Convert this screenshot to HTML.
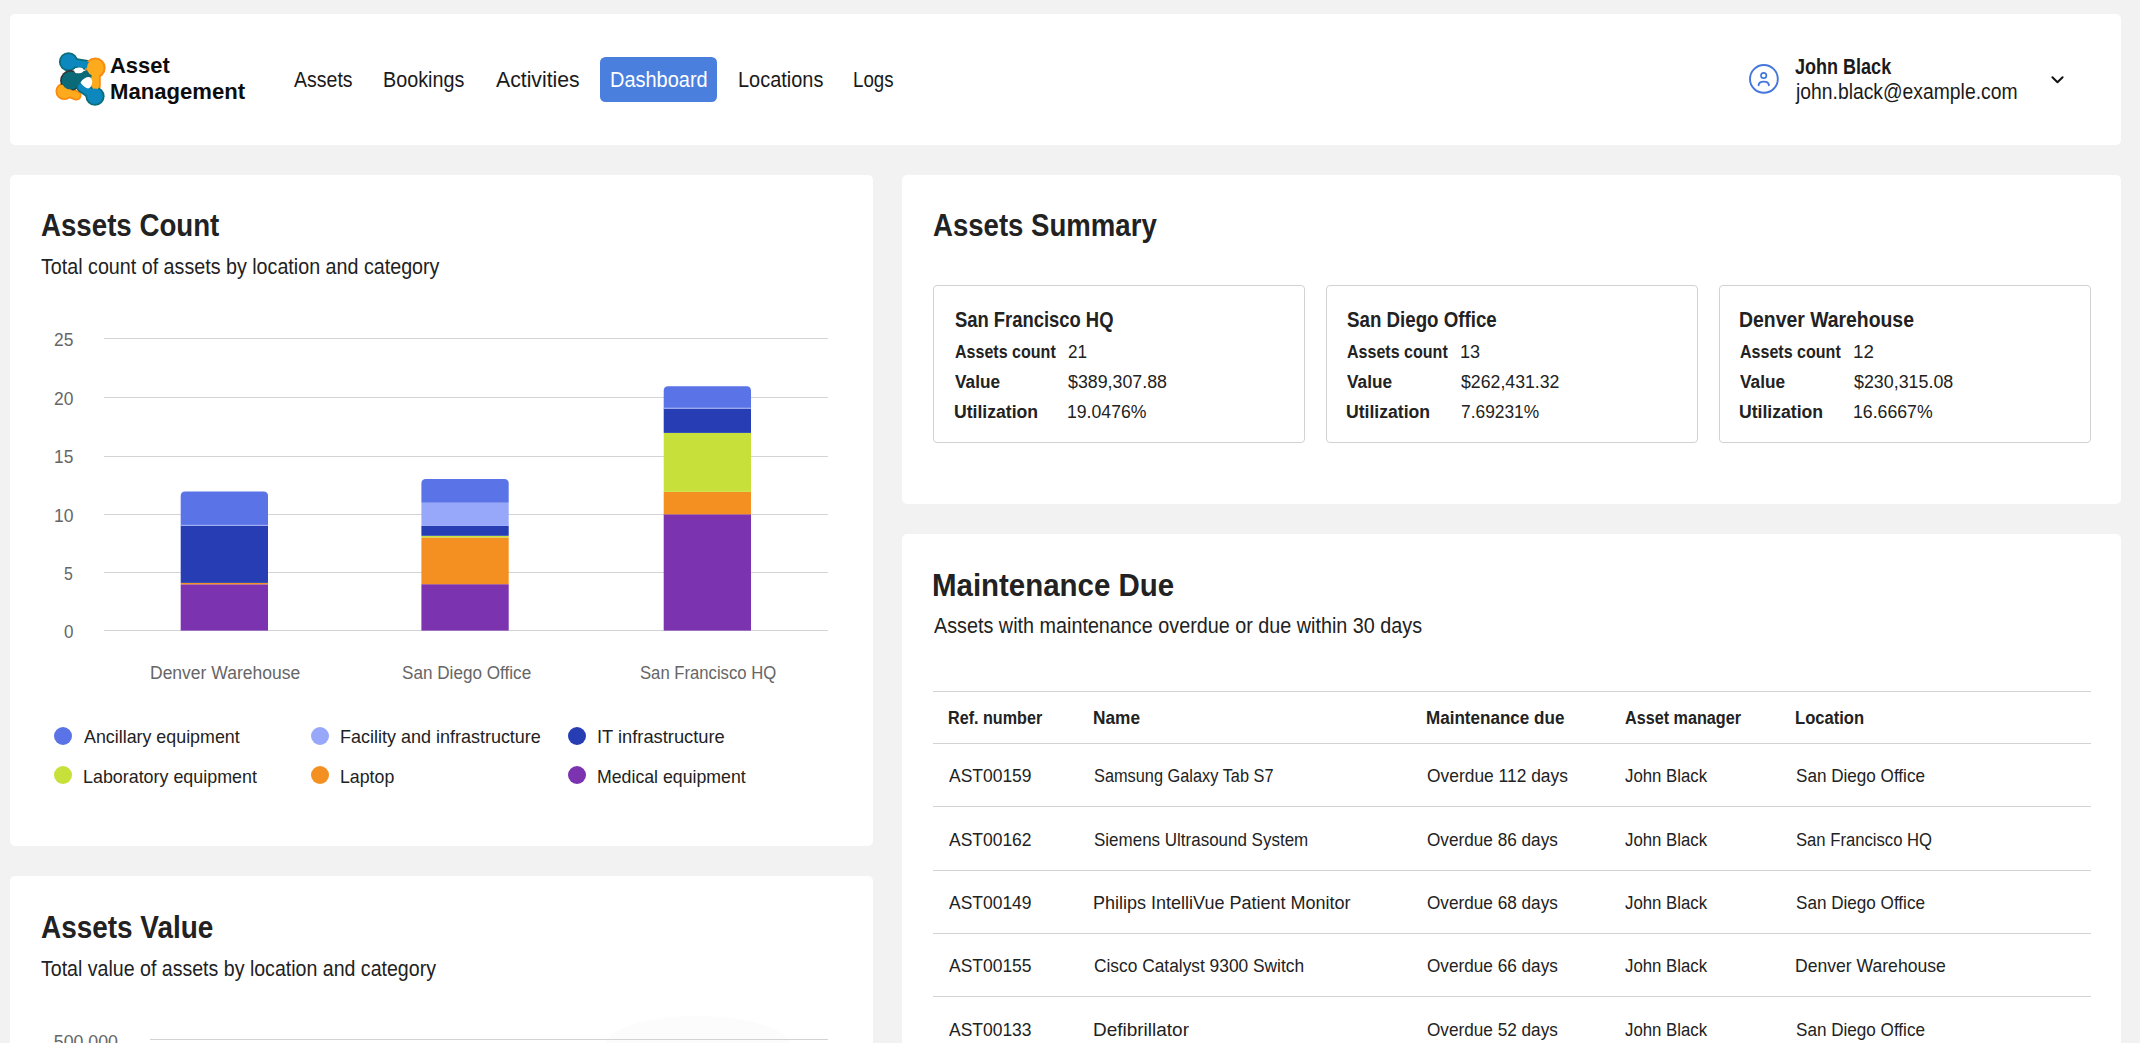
<!DOCTYPE html>
<html><head><meta charset="utf-8"><title>Asset Management Dashboard</title>
<style>
html,body{margin:0;padding:0;}
body{width:2140px;height:1043px;overflow:hidden;background:#f2f2f2;position:relative;font-family:"Liberation Sans",sans-serif;color:#222;}
.card{position:absolute;background:#fff;border-radius:5px;}
.abs{position:absolute;}
.t{position:absolute;white-space:nowrap;}
</style></head>
<body>
<div class="card" style="left:10px;top:14px;width:2110.60px;height:130.60px;"></div>
<div class="card" style="left:10px;top:174.5px;width:862.50px;height:671.10px;"></div>
<div class="card" style="left:10px;top:875.8px;width:862.50px;height:324.20px;"></div>
<div class="card" style="left:902.2px;top:174.5px;width:1218.60px;height:329.10px;"></div>
<div class="card" style="left:902.2px;top:533.8px;width:1218.60px;height:666.20px;"></div>
<svg class="abs" style="left:48px;top:46px" width="64" height="66" viewBox="48 46 64 66">
<g stroke-linecap="round" fill="none">
<path d="M64.5 91 L76.5 95.5" stroke="#f98b12" stroke-width="10"/>
<circle cx="64.3" cy="91.2" r="8.8" fill="#f98b12" stroke="none"/>
<path d="M69 62 L87 65" stroke="#0b6d7b" stroke-width="10"/>
<circle cx="68.5" cy="61.8" r="9.6" fill="#0b6d7b" stroke="none"/>
<circle cx="70.6" cy="80.6" r="10.5" fill="#333" stroke="none"/>
<path d="M95.5 68 L95.5 86" stroke="#f98b12" stroke-width="10.5"/>
<circle cx="95.3" cy="67.8" r="10.4" fill="#f98b12" stroke="none"/>
<path d="M95 96 L82 87" stroke="#0b6d7b" stroke-width="11.5"/>
<circle cx="95" cy="96.2" r="9.6" fill="#0b6d7b" stroke="none"/>

<path d="M64.5 91 L76.5 95.5" stroke="#fdab1c" stroke-width="6.5"/>
<circle cx="64.3" cy="91.2" r="7" fill="#fdab1c" stroke="none"/>
<path d="M69 62 L87 65" stroke="#0c88bf" stroke-width="6.5"/>
<circle cx="68.5" cy="61.8" r="7.8" fill="#0c88bf" stroke="none"/>
<path d="M70.5 80.5 L87 75" stroke="#0a6a78" stroke-width="9.5"/>
<circle cx="70.6" cy="80.6" r="9" fill="#0a6a78" stroke="none"/>
<path d="M95.5 68 L95.5 86" stroke="#fdab1c" stroke-width="7"/>
<circle cx="95.3" cy="67.8" r="8.4" fill="#fdab1c" stroke="none"/>
<path d="M95 96 L82 87" stroke="#0c88bf" stroke-width="8"/>
<circle cx="95" cy="96.2" r="7.8" fill="#0c88bf" stroke="none"/>
</g>
<ellipse cx="78.8" cy="70.4" rx="4.6" ry="2.8" fill="#fff" transform="rotate(-6 78.8 70.4)"/>
<path d="M80.5 82.5 Q84 77 89 77 Q92 77.5 92.2 82 Q92 87.5 88 88.5 Q84 87.5 80.5 82.5 Z" fill="#fff"/>
</svg>
<div class="t" style="left:110.30px;top:54.41px;font-size:22.67px;line-height:22.67px;font-weight:bold;color:#0d0d0d;transform:scaleX(0.9684);transform-origin:0 0;">Asset</div>
<div class="t" style="left:110.32px;top:80.31px;font-size:22.67px;line-height:22.67px;font-weight:bold;color:#0d0d0d;transform:scaleX(0.9758);transform-origin:0 0;">Management</div>
<div class="t" style="left:294.20px;top:70.01px;font-size:21.37px;line-height:21.37px;color:#1a1a1a;transform:scaleX(0.9145);transform-origin:0 0;">Assets</div>
<div class="t" style="left:383.48px;top:70.01px;font-size:21.37px;line-height:21.37px;color:#1a1a1a;transform:scaleX(0.9247);transform-origin:0 0;">Bookings</div>
<div class="t" style="left:495.70px;top:70.01px;font-size:21.37px;line-height:21.37px;color:#1a1a1a;transform:scaleX(0.9929);transform-origin:0 0;">Activities</div>
<div class="abs" style="left:599.8px;top:57px;width:117.7px;height:44.8px;background:#4a7fde;border-radius:5.5px"></div>
<div class="t" style="left:609.67px;top:70.01px;font-size:21.37px;line-height:21.37px;color:#fff;transform:scaleX(0.9346);transform-origin:0 0;">Dashboard</div>
<div class="t" style="left:737.87px;top:70.01px;font-size:21.37px;line-height:21.37px;color:#1a1a1a;transform:scaleX(0.9337);transform-origin:0 0;">Locations</div>
<div class="t" style="left:853.32px;top:70.01px;font-size:21.37px;line-height:21.37px;color:#1a1a1a;transform:scaleX(0.8760);transform-origin:0 0;">Logs</div>
<svg class="abs" style="left:1744px;top:60px" width="40" height="40" viewBox="1744 60 40 40" fill="none" stroke="#4576dc" stroke-width="1.9" stroke-linecap="round">
<circle cx="1763.9" cy="78.9" r="13.9"/>
<circle cx="1763.7" cy="75.5" r="2.7" stroke-width="1.7"/>
<path d="M1758.6 85.2 Q1758.9 81.6 1763.75 81.6 Q1768.6 81.6 1768.9 85.2"/>
</svg>
<svg class="abs" style="left:2040px;top:65px" width="35" height="30" viewBox="2040 65 35 30" fill="none" stroke="#111" stroke-width="2" stroke-linecap="round" stroke-linejoin="round">
<path d="M2052.4 77.3 L2057.5 82.2 L2062.6 77.3"/>
</svg>
<div class="t" style="left:1794.80px;top:57.39px;font-size:21.51px;line-height:21.51px;font-weight:bold;color:#1a1a1a;transform:scaleX(0.8384);transform-origin:0 0;">John Black</div>
<div class="t" style="left:1795.50px;top:81.59px;font-size:21.51px;line-height:21.51px;color:#1a1a1a;transform:scaleX(0.8987);transform-origin:0 0;">john.black@example.com</div>
<div class="t" style="left:40.80px;top:210.18px;font-size:31.69px;line-height:31.69px;font-weight:bold;transform:scaleX(0.8730);transform-origin:0 0;">Assets Count</div>
<div class="t" style="left:40.80px;top:256.20px;font-size:22.09px;line-height:22.09px;transform:scaleX(0.8919);transform-origin:0 0;">Total count of assets by location and category</div>
<svg class="abs" style="left:0;top:0" width="880" height="850" viewBox="0 0 880 850">
<rect x="104" y="630" width="724" height="1" fill="#d4d4d4"/>
<rect x="104" y="572" width="724" height="1" fill="#d4d4d4"/>
<rect x="104" y="514" width="724" height="1" fill="#d4d4d4"/>
<rect x="104" y="456" width="724" height="1" fill="#d4d4d4"/>
<rect x="104" y="397" width="724" height="1" fill="#d4d4d4"/>
<rect x="104" y="338" width="724" height="1" fill="#d4d4d4"/>
<rect x="180.70" y="584.30" width="87.3" height="46.30" fill="#7b33b0"/>
<rect x="180.70" y="582.90" width="87.3" height="1.40" fill="#f39021"/>
<rect x="180.70" y="525.60" width="87.3" height="57.30" fill="#263db3"/>
<path d="M180.70 525.60 V495.90 Q180.70 491.40 185.20 491.40 H263.50 Q268.00 491.40 268.00 495.90 V525.60 Z" fill="#5a73e6"/>
<rect x="180.70" y="524.80" width="87.3" height="1" fill="#a9b6f5"/>
<rect x="421.40" y="584.20" width="87.3" height="46.40" fill="#7b33b0"/>
<rect x="421.40" y="537.40" width="87.3" height="46.80" fill="#f39021"/>
<rect x="421.40" y="535.80" width="87.3" height="1.60" fill="#c7e03a"/>
<rect x="421.40" y="525.90" width="87.3" height="9.90" fill="#263db3"/>
<rect x="421.40" y="502.80" width="87.3" height="23.10" fill="#97a8fb"/>
<path d="M421.40 502.80 V483.50 Q421.40 479.00 425.90 479.00 H504.20 Q508.70 479.00 508.70 483.50 V502.80 Z" fill="#5a73e6"/>
<rect x="663.70" y="514.30" width="87.3" height="116.30" fill="#7b33b0"/>
<rect x="663.70" y="491.80" width="87.3" height="22.50" fill="#f39021"/>
<rect x="663.70" y="432.90" width="87.3" height="58.90" fill="#c7e03a"/>
<rect x="663.70" y="408.50" width="87.3" height="24.40" fill="#263db3"/>
<path d="M663.70 408.50 V390.80 Q663.70 386.30 668.20 386.30 H746.50 Q751.00 386.30 751.00 390.80 V408.50 Z" fill="#5a73e6"/>
<rect x="663.70" y="407.70" width="87.3" height="1" fill="#a9b6f5"/>
</svg>
<div class="t" style="left:63.60px;top:623.21px;font-size:18.90px;line-height:18.90px;color:#666;transform:scaleX(0.9000);transform-origin:0 0;">0</div>
<div class="t" style="left:64.20px;top:565.01px;font-size:18.90px;line-height:18.90px;color:#666;transform:scaleX(0.8400);transform-origin:0 0;">5</div>
<div class="t" style="left:53.57px;top:506.61px;font-size:18.90px;line-height:18.90px;color:#666;transform:scaleX(0.9283);transform-origin:0 0;">10</div>
<div class="t" style="left:53.78px;top:448.41px;font-size:18.90px;line-height:18.90px;color:#666;transform:scaleX(0.9181);transform-origin:0 0;">15</div>
<div class="t" style="left:53.70px;top:390.11px;font-size:18.90px;line-height:18.90px;color:#666;transform:scaleX(0.9221);transform-origin:0 0;">20</div>
<div class="t" style="left:53.70px;top:330.61px;font-size:18.90px;line-height:18.90px;color:#666;transform:scaleX(0.9221);transform-origin:0 0;">25</div>
<div class="t" style="left:149.77px;top:663.71px;font-size:18.90px;line-height:18.90px;color:#666;transform:scaleX(0.9264);transform-origin:0 0;">Denver Warehouse</div>
<div class="t" style="left:401.60px;top:663.71px;font-size:18.90px;line-height:18.90px;color:#666;transform:scaleX(0.9066);transform-origin:0 0;">San Diego Office</div>
<div class="t" style="left:639.50px;top:663.71px;font-size:18.90px;line-height:18.90px;color:#666;transform:scaleX(0.8826);transform-origin:0 0;">San Francisco HQ</div>
<div class="abs" style="left:54.20px;top:726.80px;width:18px;height:18px;border-radius:50%;background:#5a73e6"></div>
<div class="t" style="left:84.10px;top:728.40px;font-size:18.31px;line-height:18.31px;transform:scaleX(0.9750);transform-origin:0 0;">Ancillary equipment</div>
<div class="abs" style="left:311.00px;top:726.80px;width:18px;height:18px;border-radius:50%;background:#97a8fb"></div>
<div class="t" style="left:339.92px;top:728.40px;font-size:18.31px;line-height:18.31px;transform:scaleX(0.9827);transform-origin:0 0;">Facility and infrastructure</div>
<div class="abs" style="left:568.10px;top:726.80px;width:18px;height:18px;border-radius:50%;background:#263db3"></div>
<div class="t" style="left:597.00px;top:728.40px;font-size:18.31px;line-height:18.31px;transform:scaleX(0.9997);transform-origin:0 0;">IT infrastructure</div>
<div class="abs" style="left:54.20px;top:766.00px;width:18px;height:18px;border-radius:50%;background:#c7e03a"></div>
<div class="t" style="left:83.12px;top:767.60px;font-size:18.31px;line-height:18.31px;transform:scaleX(0.9767);transform-origin:0 0;">Laboratory equipment</div>
<div class="abs" style="left:311.00px;top:766.00px;width:18px;height:18px;border-radius:50%;background:#f39021"></div>
<div class="t" style="left:339.93px;top:767.60px;font-size:18.31px;line-height:18.31px;transform:scaleX(0.9692);transform-origin:0 0;">Laptop</div>
<div class="abs" style="left:568.10px;top:766.00px;width:18px;height:18px;border-radius:50%;background:#7b33b0"></div>
<div class="t" style="left:597.03px;top:767.60px;font-size:18.31px;line-height:18.31px;transform:scaleX(0.9679);transform-origin:0 0;">Medical equipment</div>
<div class="t" style="left:40.80px;top:911.88px;font-size:31.69px;line-height:31.69px;font-weight:bold;transform:scaleX(0.8814);transform-origin:0 0;">Assets Value</div>
<div class="t" style="left:41.40px;top:957.90px;font-size:22.09px;line-height:22.09px;transform:scaleX(0.8865);transform-origin:0 0;">Total value of assets by location and category</div>
<svg class="abs" style="left:560px;top:1000px" width="280" height="43" viewBox="560 1000 280 43"><ellipse cx="697.4" cy="1046" rx="93" ry="30" fill="#fcfcfc"/></svg>
<div class="abs" style="left:149.7px;top:1039px;width:678px;height:1px;background:#d3d3d3"></div>
<div class="t" style="left:118.30px;top:1033.41px;font-size:18.90px;line-height:18.90px;color:#666;transform:translateX(-100%) scaleX(0.9400);transform-origin:100% 0;">500,000</div>
<div class="t" style="left:932.90px;top:209.78px;font-size:31.69px;line-height:31.69px;font-weight:bold;transform:scaleX(0.8702);transform-origin:0 0;">Assets Summary</div>
<div class="abs" style="left:933.00px;top:285px;width:372px;height:158px;box-sizing:border-box;border:1px solid #d2d2d2;border-radius:4px"></div>
<div class="t" style="left:954.70px;top:308.84px;font-size:21.22px;line-height:21.22px;font-weight:bold;transform:scaleX(0.8669);transform-origin:0 0;">San Francisco HQ</div>
<div class="t" style="left:954.70px;top:342.67px;font-size:18.46px;line-height:18.46px;font-weight:bold;transform:scaleX(0.8700);transform-origin:0 0;">Assets count</div>
<div class="t" style="left:1068.40px;top:342.67px;font-size:18.46px;line-height:18.46px;transform:scaleX(0.9282);transform-origin:0 0;">21</div>
<div class="t" style="left:954.70px;top:373.27px;font-size:18.46px;line-height:18.46px;font-weight:bold;transform:scaleX(0.9349);transform-origin:0 0;">Value</div>
<div class="t" style="left:1068.40px;top:373.27px;font-size:18.46px;line-height:18.46px;transform:scaleX(0.9650);transform-origin:0 0;">$389,307.88</div>
<div class="t" style="left:953.75px;top:403.17px;font-size:18.46px;line-height:18.46px;font-weight:bold;transform:scaleX(0.9549);transform-origin:0 0;">Utilization</div>
<div class="t" style="left:1067.44px;top:403.17px;font-size:18.46px;line-height:18.46px;transform:scaleX(0.9566);transform-origin:0 0;">19.0476%</div>
<div class="abs" style="left:1325.90px;top:285px;width:372px;height:158px;box-sizing:border-box;border:1px solid #d2d2d2;border-radius:4px"></div>
<div class="t" style="left:1347.40px;top:308.84px;font-size:21.22px;line-height:21.22px;font-weight:bold;transform:scaleX(0.8819);transform-origin:0 0;">San Diego Office</div>
<div class="t" style="left:1347.40px;top:342.67px;font-size:18.46px;line-height:18.46px;font-weight:bold;transform:scaleX(0.8700);transform-origin:0 0;">Assets count</div>
<div class="t" style="left:1460.12px;top:342.67px;font-size:18.46px;line-height:18.46px;transform:scaleX(0.9816);transform-origin:0 0;">13</div>
<div class="t" style="left:1347.40px;top:373.27px;font-size:18.46px;line-height:18.46px;font-weight:bold;transform:scaleX(0.9349);transform-origin:0 0;">Value</div>
<div class="t" style="left:1461.10px;top:373.27px;font-size:18.46px;line-height:18.46px;transform:scaleX(0.9601);transform-origin:0 0;">$262,431.32</div>
<div class="t" style="left:1346.45px;top:403.17px;font-size:18.46px;line-height:18.46px;font-weight:bold;transform:scaleX(0.9549);transform-origin:0 0;">Utilization</div>
<div class="t" style="left:1461.10px;top:403.17px;font-size:18.46px;line-height:18.46px;transform:scaleX(0.9414);transform-origin:0 0;">7.69231%</div>
<div class="abs" style="left:1718.80px;top:285px;width:372px;height:158px;box-sizing:border-box;border:1px solid #d2d2d2;border-radius:4px"></div>
<div class="t" style="left:1739.19px;top:308.84px;font-size:21.22px;line-height:21.22px;font-weight:bold;transform:scaleX(0.9138);transform-origin:0 0;">Denver Warehouse</div>
<div class="t" style="left:1740.10px;top:342.67px;font-size:18.46px;line-height:18.46px;font-weight:bold;transform:scaleX(0.8700);transform-origin:0 0;">Assets count</div>
<div class="t" style="left:1852.78px;top:342.67px;font-size:18.46px;line-height:18.46px;transform:scaleX(1.0180);transform-origin:0 0;">12</div>
<div class="t" style="left:1740.10px;top:373.27px;font-size:18.46px;line-height:18.46px;font-weight:bold;transform:scaleX(0.9349);transform-origin:0 0;">Value</div>
<div class="t" style="left:1853.80px;top:373.27px;font-size:18.46px;line-height:18.46px;transform:scaleX(0.9680);transform-origin:0 0;">$230,315.08</div>
<div class="t" style="left:1739.15px;top:403.17px;font-size:18.46px;line-height:18.46px;font-weight:bold;transform:scaleX(0.9549);transform-origin:0 0;">Utilization</div>
<div class="t" style="left:1852.84px;top:403.17px;font-size:18.46px;line-height:18.46px;transform:scaleX(0.9590);transform-origin:0 0;">16.6667%</div>
<div class="t" style="left:931.74px;top:570.08px;font-size:31.69px;line-height:31.69px;font-weight:bold;transform:scaleX(0.9292);transform-origin:0 0;">Maintenance Due</div>
<div class="t" style="left:933.60px;top:615.30px;font-size:22.09px;line-height:22.09px;transform:scaleX(0.8958);transform-origin:0 0;">Assets with maintenance overdue or due within 30 days</div>
<div class="abs" style="left:933px;top:691px;width:1157.6px;height:1px;background:#d3d3d3"></div>
<div class="abs" style="left:933px;top:743px;width:1157.6px;height:1px;background:#d3d3d3"></div>
<div class="abs" style="left:933px;top:806px;width:1157.6px;height:1px;background:#d3d3d3"></div>
<div class="abs" style="left:933px;top:870px;width:1157.6px;height:1px;background:#d3d3d3"></div>
<div class="abs" style="left:933px;top:933px;width:1157.6px;height:1px;background:#d3d3d3"></div>
<div class="abs" style="left:933px;top:996px;width:1157.6px;height:1px;background:#d3d3d3"></div>
<div class="t" style="left:947.74px;top:709.43px;font-size:18.75px;line-height:18.75px;font-weight:bold;transform:scaleX(0.8608);transform-origin:0 0;">Ref. number</div>
<div class="t" style="left:1093.08px;top:709.43px;font-size:18.75px;line-height:18.75px;font-weight:bold;transform:scaleX(0.9206);transform-origin:0 0;">Name</div>
<div class="t" style="left:1425.79px;top:709.43px;font-size:18.75px;line-height:18.75px;font-weight:bold;transform:scaleX(0.9098);transform-origin:0 0;">Maintenance due</div>
<div class="t" style="left:1625.30px;top:709.43px;font-size:18.75px;line-height:18.75px;font-weight:bold;transform:scaleX(0.8628);transform-origin:0 0;">Asset manager</div>
<div class="t" style="left:1795.02px;top:709.43px;font-size:18.75px;line-height:18.75px;font-weight:bold;transform:scaleX(0.8843);transform-origin:0 0;">Location</div>
<div class="t" style="left:948.60px;top:767.37px;font-size:18.46px;line-height:18.46px;transform:scaleX(0.9473);transform-origin:0 0;">AST00159</div>
<div class="t" style="left:1094.00px;top:767.37px;font-size:18.46px;line-height:18.46px;transform:scaleX(0.8862);transform-origin:0 0;">Samsung Galaxy Tab S7</div>
<div class="t" style="left:1426.70px;top:767.37px;font-size:18.46px;line-height:18.46px;transform:scaleX(0.9438);transform-origin:0 0;">Overdue 112 days</div>
<div class="t" style="left:1625.30px;top:767.37px;font-size:18.46px;line-height:18.46px;transform:scaleX(0.9102);transform-origin:0 0;">John Black</div>
<div class="t" style="left:1795.90px;top:767.37px;font-size:18.46px;line-height:18.46px;transform:scaleX(0.9273);transform-origin:0 0;">San Diego Office</div>
<div class="t" style="left:948.60px;top:830.67px;font-size:18.46px;line-height:18.46px;transform:scaleX(0.9473);transform-origin:0 0;">AST00162</div>
<div class="t" style="left:1094.00px;top:830.67px;font-size:18.46px;line-height:18.46px;transform:scaleX(0.9210);transform-origin:0 0;">Siemens Ultrasound System</div>
<div class="t" style="left:1426.70px;top:830.67px;font-size:18.46px;line-height:18.46px;transform:scaleX(0.9316);transform-origin:0 0;">Overdue 86 days</div>
<div class="t" style="left:1625.30px;top:830.67px;font-size:18.46px;line-height:18.46px;transform:scaleX(0.9102);transform-origin:0 0;">John Black</div>
<div class="t" style="left:1795.90px;top:830.67px;font-size:18.46px;line-height:18.46px;transform:scaleX(0.9030);transform-origin:0 0;">San Francisco HQ</div>
<div class="t" style="left:948.60px;top:893.97px;font-size:18.46px;line-height:18.46px;transform:scaleX(0.9473);transform-origin:0 0;">AST00149</div>
<div class="t" style="left:1093.02px;top:893.97px;font-size:18.46px;line-height:18.46px;transform:scaleX(0.9768);transform-origin:0 0;">Philips IntelliVue Patient Monitor</div>
<div class="t" style="left:1426.70px;top:893.97px;font-size:18.46px;line-height:18.46px;transform:scaleX(0.9316);transform-origin:0 0;">Overdue 68 days</div>
<div class="t" style="left:1625.30px;top:893.97px;font-size:18.46px;line-height:18.46px;transform:scaleX(0.9102);transform-origin:0 0;">John Black</div>
<div class="t" style="left:1795.90px;top:893.97px;font-size:18.46px;line-height:18.46px;transform:scaleX(0.9273);transform-origin:0 0;">San Diego Office</div>
<div class="t" style="left:948.60px;top:957.27px;font-size:18.46px;line-height:18.46px;transform:scaleX(0.9473);transform-origin:0 0;">AST00155</div>
<div class="t" style="left:1094.00px;top:957.27px;font-size:18.46px;line-height:18.46px;transform:scaleX(0.9402);transform-origin:0 0;">Cisco Catalyst 9300 Switch</div>
<div class="t" style="left:1426.70px;top:957.27px;font-size:18.46px;line-height:18.46px;transform:scaleX(0.9316);transform-origin:0 0;">Overdue 66 days</div>
<div class="t" style="left:1625.30px;top:957.27px;font-size:18.46px;line-height:18.46px;transform:scaleX(0.9102);transform-origin:0 0;">John Black</div>
<div class="t" style="left:1794.95px;top:957.27px;font-size:18.46px;line-height:18.46px;transform:scaleX(0.9534);transform-origin:0 0;">Denver Warehouse</div>
<div class="t" style="left:948.60px;top:1020.57px;font-size:18.46px;line-height:18.46px;transform:scaleX(0.9473);transform-origin:0 0;">AST00133</div>
<div class="t" style="left:1092.97px;top:1020.57px;font-size:18.46px;line-height:18.46px;transform:scaleX(1.0293);transform-origin:0 0;">Defibrillator</div>
<div class="t" style="left:1426.70px;top:1020.57px;font-size:18.46px;line-height:18.46px;transform:scaleX(0.9316);transform-origin:0 0;">Overdue 52 days</div>
<div class="t" style="left:1625.30px;top:1020.57px;font-size:18.46px;line-height:18.46px;transform:scaleX(0.9102);transform-origin:0 0;">John Black</div>
<div class="t" style="left:1795.90px;top:1020.57px;font-size:18.46px;line-height:18.46px;transform:scaleX(0.9273);transform-origin:0 0;">San Diego Office</div>

</body></html>
